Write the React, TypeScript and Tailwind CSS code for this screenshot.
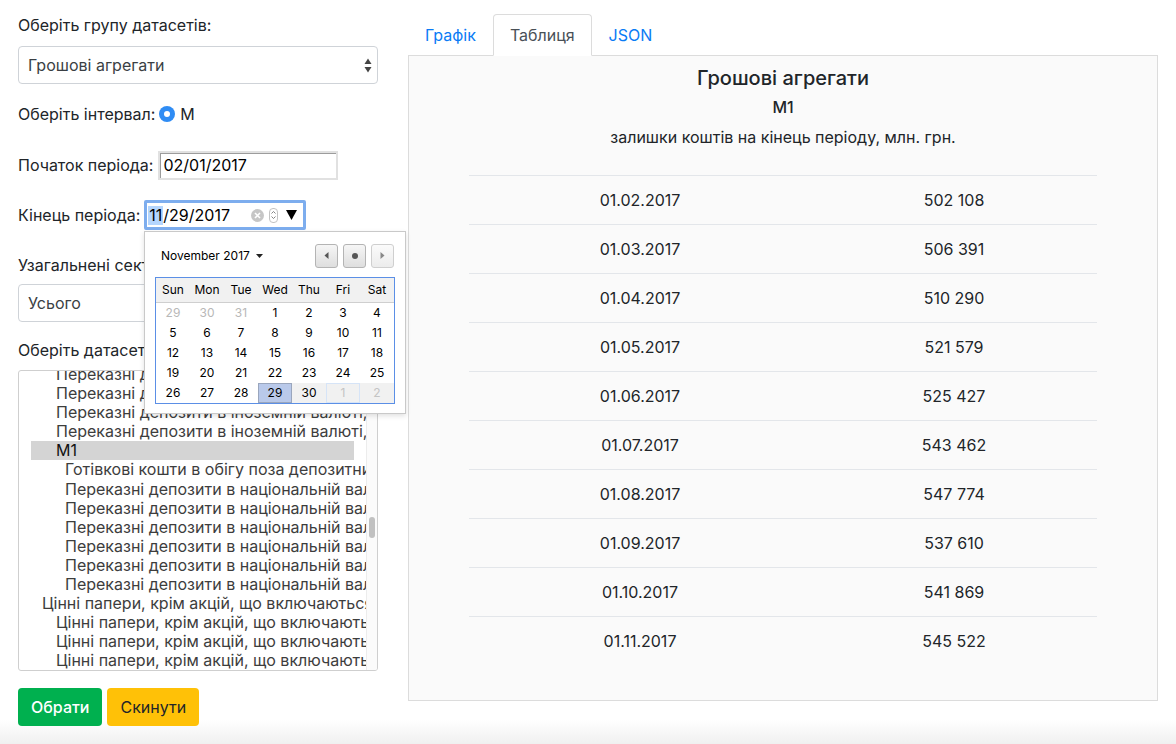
import React from 'react';

const listItems: { t: string; cls: string; sel?: boolean }[] = [
  { t: 'Переказні депозити в іноземній валюті, нефінансові корпорації', cls: 'pl-[37px]' },
  { t: 'Переказні депозити в іноземній валюті, домашні господарства', cls: 'pl-[37px]' },
  { t: 'Переказні депозити в іноземній валюті, інші фінансові корпорації', cls: 'pl-[37px]' },
  { t: 'Переказні депозити в іноземній валюті, інші сектори', cls: 'pl-[37px]' },
  { t: 'М1', cls: 'ml-[12px] w-[323px] pl-[25px] bg-[#d4d4d4] text-[#111]', sel: true },
  { t: 'Готівкові кошти в обігу поза депозитними корпораціями', cls: 'pl-[46px]' },
  { t: 'Переказні депозити в національній валюті, нефінансові корпорації', cls: 'pl-[46px]' },
  { t: 'Переказні депозити в національній валюті, домашні господарства', cls: 'pl-[46px]' },
  { t: 'Переказні депозити в національній валюті, інші фінансові корпорації', cls: 'pl-[46px]' },
  { t: 'Переказні депозити в національній валюті, державні нефінансові корпорації', cls: 'pl-[46px]' },
  { t: 'Переказні депозити в національній валюті, приватні нефінансові корпорації', cls: 'pl-[46px]' },
  { t: 'Переказні депозити в національній валюті, інші сектори', cls: 'pl-[46px]' },
  { t: 'Цінні папери, крім акцій, що включаються до широкої грошової маси', cls: 'pl-[23px]' },
  { t: 'Цінні папери, крім акцій, що включаються до М3, в національній валюті', cls: 'pl-[37px]' },
  { t: 'Цінні папери, крім акцій, що включаються до М3, в іноземній валюті', cls: 'pl-[37px]' },
  { t: 'Цінні папери, крім акцій, що включаються до М3, інші', cls: 'pl-[37px]' },
];

const rows: [string, string][] = [
  ['01.02.2017', '502 108'],
  ['01.03.2017', '506 391'],
  ['01.04.2017', '510 290'],
  ['01.05.2017', '521 579'],
  ['01.06.2017', '525 427'],
  ['01.07.2017', '543 462'],
  ['01.08.2017', '547 774'],
  ['01.09.2017', '537 610'],
  ['01.10.2017', '541 869'],
  ['01.11.2017', '545 522'],
];

type Day = { d: number; cls: string };
const weeks: Day[][] = [
  [
    { d: 29, cls: 'text-[#b8b8b8]' },
    { d: 30, cls: 'text-[#b8b8b8]' },
    { d: 31, cls: 'text-[#b8b8b8]' },
    { d: 1, cls: '' },
    { d: 2, cls: '' },
    { d: 3, cls: '' },
    { d: 4, cls: '' },
  ],
  [5, 6, 7, 8, 9, 10, 11].map((d) => ({ d, cls: '' })),
  [12, 13, 14, 15, 16, 17, 18].map((d) => ({ d, cls: '' })),
  [19, 20, 21, 22, 23, 24, 25].map((d) => ({ d, cls: '' })),
  [
    { d: 26, cls: '' },
    { d: 27, cls: '' },
    { d: 28, cls: '' },
    { d: 29, cls: 'bg-[#b9c9ea] border border-[#9aa6bd]' },
    { d: 30, cls: 'bg-[#f1f1f1]' },
    { d: 1, cls: 'bg-[#f1f1f1] text-[#c4c4c4] border border-[#d6e4f7]' },
    { d: 2, cls: 'bg-[#f1f1f1] text-[#c4c4c4]' },
  ],
];

function UpDown() {
  return (
    <svg width="8" height="15" viewBox="0 0 8 15">
      <path d="M4 0.5 L7.5 6 H0.5 Z" fill="#444" />
      <path d="M0.5 9 H7.5 L4 14.5 Z" fill="#444" />
    </svg>
  );
}

function NavBtn({ kind, light }: { kind: 'l' | 'c' | 'r'; light?: boolean }) {
  return (
    <div
      className={`w-[23px] h-[24px] rounded-[3px] border flex items-center justify-center ${
        light
          ? 'border-[#cfcfcf] bg-[linear-gradient(#fbfbfb,#ececec)]'
          : 'border-[#b4b4b4] bg-[linear-gradient(#f6f6f6,#dedede)]'
      }`}
    >
      {kind === 'l' && (
        <svg width="5" height="7" viewBox="0 0 5 7">
          <path d="M4.5 0 V7 L0.5 3.5 Z" fill="#555" />
        </svg>
      )}
      {kind === 'c' && <div className="w-[6px] h-[6px] rounded-full bg-[#555]" />}
      {kind === 'r' && (
        <svg width="5" height="7" viewBox="0 0 5 7">
          <path d="M0.5 0 V7 L4.5 3.5 Z" fill={light ? '#888' : '#555'} />
        </svg>
      )}
    </div>
  );
}

function Calendar() {
  return (
    <div className="absolute left-[144px] top-[231px] w-[262px] h-[183px] bg-white border border-[#c9c9c9] shadow-[0_2px_5px_rgba(0,0,0,0.12)] text-[12px] leading-[16px] text-black">
      <div className="flex items-center justify-between h-[45px] pl-[16px] pr-[11px] pt-[2px]">
        <div className="flex items-center">
          <span>November 2017</span>
          <svg className="ml-[6px]" width="7" height="4" viewBox="0 0 7 4">
            <path d="M0 0 H7 L3.5 4 Z" fill="#222" />
          </svg>
        </div>
        <div className="flex gap-[5px]">
          <NavBtn kind="l" />
          <NavBtn kind="c" />
          <NavBtn kind="r" light />
        </div>
      </div>
      <div className="ml-[10px] w-[240px] border border-[#5b8fe6]">
        <div className="grid grid-cols-7 h-[25px] bg-[#f1f1f1] border-b border-[#cfcfcf] items-center text-center">
          {['Sun', 'Mon', 'Tue', 'Wed', 'Thu', 'Fri', 'Sat'].map((d) => (
            <div key={d}>{d}</div>
          ))}
        </div>
        {weeks.map((w, i) => (
          <div key={i} className="grid grid-cols-7 h-[20px]">
            {w.map((c, j) => (
              <div key={j} className={`flex items-center justify-center ${c.cls}`}>
                {c.d}
              </div>
            ))}
          </div>
        ))}
      </div>
    </div>
  );
}

export default function App() {
  return (
    <div className="relative w-[1176px] h-[744px] overflow-hidden bg-[linear-gradient(to_bottom,#ffffff_0px,#ffffff_720px,#f0f0f0_744px)] text-[#212529] text-[16px] leading-[24px] font-['Inter','Liberation_Sans',Arial,sans-serif]">
      <div className="flex">
        {/* Left column */}
        <div className="w-[378px] shrink-0 pl-[18px] pt-[13px]">
          <div>Оберіть групу датасетів:</div>
          <div className="mt-[9px] w-[360px] h-[38px] rounded-[4px] border border-[#cfd3d8] flex items-center justify-between pl-[9px] pr-[5px] text-[#3a3f44]">
            <span>Грошові агрегати</span>
            <UpDown />
          </div>

          <div className="mt-[18px] h-[24px] flex items-center">
            <span>Оберіть інтервал:</span>
            <span className="ml-[4px] w-[16px] h-[16px] rounded-full bg-[#2f8cf4] flex items-center justify-center">
              <span className="w-[6px] h-[6px] rounded-full bg-white" />
            </span>
            <span className="ml-[5px]">М</span>
          </div>

          <div className="mt-[24px] h-[30px] flex items-center">
            <span>Початок періода:</span>
            <div className="ml-[5px] w-[180px] h-[29px] border-2 border-[#e1e1e1] shadow-[inset_1px_1px_0_#9c9c9c] flex items-center pl-[3px] text-black">
              02/01/2017
            </div>
          </div>

          <div className="mt-[20px] h-[30px] flex items-center">
            <span>Кінець періода:</span>
            <div className="ml-[4px] w-[162px] h-[30px] border-[3px] border-[#7dadee] rounded-[2px] flex items-center pl-[1px] text-black">
              <span className="bg-[#b4d5fd] leading-[19px] px-[1px]">11</span>
              <span>/29/2017</span>
              <span className="ml-[21px] w-[13px] h-[13px] rounded-full bg-[#c6c6c6] flex items-center justify-center">
                <svg width="7" height="7" viewBox="0 0 7 7">
                  <path d="M1 1 L6 6 M6 1 L1 6" stroke="white" strokeWidth="1.6" />
                </svg>
              </span>
              <span className="ml-[5px] w-[9px] h-[15px] rounded-[4px] border border-[#c3c3c3] flex flex-col items-center justify-center gap-[2px]">
                <svg width="5" height="3" viewBox="0 0 5 3">
                  <path d="M0.5 2.5 L2.5 0.5 L4.5 2.5" stroke="#777" strokeWidth="0.9" fill="none" />
                </svg>
                <svg width="5" height="3" viewBox="0 0 5 3">
                  <path d="M0.5 0.5 L2.5 2.5 L4.5 0.5" stroke="#777" strokeWidth="0.9" fill="none" />
                </svg>
              </span>
              <svg className="ml-[8px]" width="11" height="10" viewBox="0 0 11 10">
                <path d="M0 0 H11 L5.5 10 Z" fill="#000" />
              </svg>
            </div>
          </div>

          <div className="mt-[23px]">Узагальнені сектори економіки:</div>
          <div className="mt-[7px] w-[360px] h-[38px] rounded-[4px] border border-[#cfd3d8] flex items-center justify-between pl-[9px] pr-[5px] text-[#3a3f44]">
            <span>Усього</span>
            <UpDown />
          </div>

          <div className="mt-[16px]">Оберіть датасети:</div>
          <div className="mt-[8px] w-[360px] h-[301px] rounded-[3px] border border-[#cfcfcf] flex overflow-hidden">
            <div className="w-[347px] h-full overflow-hidden text-[#3d3d3d]">
              <div className="-mt-[6px]">
                {listItems.map((it, i) => (
                  <div key={i} className={`whitespace-nowrap leading-[19.1px] h-[19.1px] ${it.cls}`}>
                    {it.t}
                  </div>
                ))}
              </div>
            </div>
            <div className="w-[11px] h-full border-l border-[#ececec] bg-[#fbfbfb] pt-[146px] pl-[2px]">
              <div className="w-[6px] h-[21px] rounded-full bg-[#c1c1c1]" />
            </div>
          </div>

          <div className="mt-[17px] flex gap-[5px]">
            <button className="h-[38px] px-[13px] rounded-[4px] bg-[#00b04f] text-white font-medium">Обрати</button>
            <button className="h-[38px] px-[13px] rounded-[4px] bg-[#ffc107] text-[#212529]">Скинути</button>
          </div>
        </div>

        {/* Right column */}
        <div className="ml-[30px] w-[750px] pt-[14px]">
          <div className="flex h-[41px]">
            <div className="px-[16px] pt-[8px] border border-transparent text-[#0a7bf5]">Графік</div>
            <div className="relative z-10 px-[16px] pt-[8px] h-[42px] border border-[#dcdcdc] border-b-white rounded-t-[4px] bg-white text-[#495057]">
              Таблиця
            </div>
            <div className="px-[16px] pt-[8px] border border-transparent text-[#0a7bf5]">JSON</div>
          </div>
          <div className="w-[750px] h-[646px] border border-[#dcdcdc] bg-[#fafafa] pt-[10px]">
            <div className="text-center text-[20px] leading-[24px] font-medium">Грошові агрегати</div>
            <div className="mt-[5px] text-center font-medium">М1</div>
            <div className="mt-[6px] text-center">залишки коштів на кінець періоду, млн. грн.</div>
            <div className="mt-[26px] ml-[60px] w-[628px]">
              {rows.map((r) => (
                <div key={r[0]} className="grid grid-cols-[342px_286px] h-[49px] border-t border-[#e3e6ea] items-center text-center">
                  <div>{r[0]}</div>
                  <div>{r[1]}</div>
                </div>
              ))}
            </div>
          </div>
        </div>
      </div>

      <Calendar />
    </div>
  );
}
